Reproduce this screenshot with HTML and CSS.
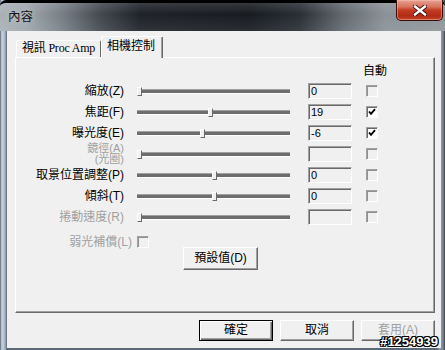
FILE: index.html
```html
<!DOCTYPE html>
<html>
<head>
    <meta charset="UTF-8">
    <title>內容</title>
    <link rel="stylesheet" href="styles.css">
</head>
<body>
    <div class="window">
        <div class="titlebar">
            <span class="title">內容</span>
            <button class="close" aria-label="close">
                <svg width="14" height="11" viewBox="0 0 14 11">
                    <path d="M2 1.5 L12 9.5 M12 1.5 L2 9.5" stroke="#3a0c06" stroke-width="4.2" stroke-linecap="square"/>
                    <path d="M2 1.5 L12 9.5 M12 1.5 L2 9.5" stroke="#fff" stroke-width="2.4" stroke-linecap="square"/>
                </svg>
            </button>
        </div>

        <div class="client">
            <div class="tabs">
                <div class="tab tab-serif">視訊 Proc Amp</div>
                <div class="tab active">相機控制</div>
            </div>

            <div class="panel">
                <div class="auto-head">自動</div>

                <div class="rows">
                    <div class="row">
                        <span class="label">縮放(Z)</span>
                        <div class="slider"><span class="thumb" style="left: 0px"></span></div>
                        <div class="field">0</div>
                        <span class="check"></span>
                    </div>
                    <div class="row">
                        <span class="label">焦距(F)</span>
                        <div class="slider"><span class="thumb" style="left: 71px"></span></div>
                        <div class="field">19</div>
                        <span class="check checked">
                            <svg width="8" height="8" viewBox="0 0 8 8"><path d="M1 3.5 L3 5.8 L7 1.2" fill="none" stroke="#000" stroke-width="1.9"/></svg>
                        </span>
                    </div>
                    <div class="row">
                        <span class="label">曝光度(E)</span>
                        <div class="slider"><span class="thumb" style="left: 63px"></span></div>
                        <div class="field">-6</div>
                        <span class="check checked">
                            <svg width="8" height="8" viewBox="0 0 8 8"><path d="M1 3.5 L3 5.8 L7 1.2" fill="none" stroke="#000" stroke-width="1.9"/></svg>
                        </span>
                    </div>
                    <div class="row disabled">
                        <span class="label two-line">鏡徑(A)<br>(光圈)</span>
                        <div class="slider"><span class="thumb" style="left: 0px"></span></div>
                        <div class="field"></div>
                        <span class="check"></span>
                    </div>
                    <div class="row">
                        <span class="label">取景位置調整(P)</span>
                        <div class="slider"><span class="thumb" style="left: 75px"></span></div>
                        <div class="field">0</div>
                        <span class="check"></span>
                    </div>
                    <div class="row">
                        <span class="label">傾斜(T)</span>
                        <div class="slider"><span class="thumb" style="left: 75px"></span></div>
                        <div class="field">0</div>
                        <span class="check"></span>
                    </div>
                    <div class="row disabled">
                        <span class="label">捲動速度(R)</span>
                        <div class="slider"><span class="thumb" style="left: 0px"></span></div>
                        <div class="field"></div>
                        <span class="check"></span>
                    </div>
                </div>

                <div class="low-light">
                    <span class="label">弱光補償(L)</span>
                    <span class="check"></span>
                </div>

                <button class="btn preset">預設值(D)</button>
            </div>

            <div class="actions">
                <button class="btn default">確定</button>
                <button class="btn">取消</button>
                <button class="btn muted">套用(A)</button>
            </div>
        </div>

        <div class="stamp">#1254939</div>
    </div>
</body>
</html>
```

FILE: styles.css
```css
* {
    margin: 0;
    padding: 0;
    box-sizing: border-box;
}

body {
    width: 445px;
    height: 350px;
    overflow: hidden;
    background: #000;
    font-family: "Liberation Sans", "Noto Sans CJK TC", sans-serif;
    font-size: 12px;
    color: #000;
}

button {
    font-family: inherit;
    font-size: 12px;
    color: inherit;
    cursor: default;
}

/* window frame */
.window {
    position: relative;
    width: 445px;
    height: 350px;
    display: flex;
    flex-direction: column;
    background:
        linear-gradient(to right, #3a4450 0, #aebdcb 1px, #c6d2de 3px, #8898a8 6px, #4d5a67 7px,
            #5c6976 8px, #5c6976 436px, #8d9aa6 440px, #7b8894 443px, #34404b 445px);
}

.titlebar {
    height: 31px;
    display: flex;
    align-items: flex-start;
    padding-left: 8px;
    border-top: 3px solid #000;
    background:
        linear-gradient(to bottom, rgba(255, 255, 255, 0.12), rgba(255, 255, 255, 0) 40%, rgba(255, 255, 255, 0.08)),
        linear-gradient(to right, #aab1b7 0, #a0a7ad 25px, #7a8188 60px, #434950 100px, #1f2329 140px,
            #181c21 250px, #2a2f35 300px, #646b72 345px, #8a9197 385px, #8f979c 445px);
    border-radius: 6px 6px 0 0;
}

.title {
    margin-top: 7px;
    font-size: 12.5px;
    line-height: 14px;
    color: #141414;
    text-shadow: 0 0 6px rgba(230, 235, 240, 0.6);
}

.close {
    margin: -3px 2px 0 auto;
    width: 47px;
    height: 21px;
    display: flex;
    align-items: center;
    justify-content: center;
    border: 1px solid #3b0d08;
    border-top: none;
    border-radius: 0 0 5px 5px;
    background: linear-gradient(to bottom, #e7a395 0, #d7705b 35%, #c53b23 50%, #b22a15 80%, #c4462c 100%);
    box-shadow: inset 0 0 0 1px rgba(255, 200, 185, 0.45);
}

.client {
    flex: 1;
    margin: 0 4px 2px 7px;
    background: #f0f0f0;
    display: flex;
    flex-direction: column;
}

/* tabs */
.tabs {
    height: 26px;
    padding: 5px 0 0 9px;
    display: flex;
    align-items: flex-end;
}

.tab {
    height: 17px;
    width: 85px;
    padding-left: 5px;
    line-height: 15px;
    border: 1px solid;
    border-color: #fff #696969 transparent #fff;
    border-bottom: none;
    border-radius: 2px 2px 0 0;
    background: #f0f0f0;
    white-space: nowrap;
}

.tab-serif {
    font-family: "Liberation Serif", "Noto Sans CJK TC", serif;
    font-size: 12px;
    letter-spacing: -0.2px;
}

.tab.active {
    position: relative;
    z-index: 1;
    width: 62px;
    height: 22px;
    margin-bottom: -1px;
    padding-left: 5px;
    line-height: 18px;
    box-shadow: inset -1px 0 0 #a0a0a0;
}

.panel {
    margin-left: 8px;
    width: 420px;
    height: 256px;
    border: 1px solid;
    border-color: #fff #696969 #696969 #fff;
    box-shadow: inset -1px -1px 0 #a0a0a0;
}

.auto-head {
    height: 25px;
    padding: 6px 0 0 347px;
    line-height: 14px;
}

/* control rows */
.rows {
    display: flex;
    flex-direction: column;
    gap: 5px;
}

.row {
    height: 16px;
    display: flex;
    align-items: center;
}

.label {
    width: 108px;
    text-align: right;
    line-height: 14px;
    white-space: nowrap;
}

.label.two-line {
    font-size: 11px;
    line-height: 11px;
}

.disabled .label,
.low-light .label,
.btn.muted {
    color: #a0a0a0;
}

.slider {
    position: relative;
    width: 153px;
    height: 16px;
    margin-left: 13px;
}

.slider::before {
    content: "";
    position: absolute;
    left: 0;
    right: 0;
    top: 6px;
    height: 3px;
    border-top: 1px solid #a0a0a0;
    border-bottom: 1px solid #fff;
    background: #6d6d6d;
}

.thumb {
    position: absolute;
    top: 4px;
    width: 5px;
    height: 9px;
    border: 1px solid;
    border-color: #fff #696969 #696969 #fff;
    background: #f0f0f0;
}

.field {
    width: 44px;
    height: 16px;
    margin-left: 18px;
    padding-left: 2px;
    border: 1px solid;
    border-color: #a0a0a0 #fff #fff #a0a0a0;
    box-shadow: inset 1px 1px 0 #696969;
    font-size: 11px;
    line-height: 14px;
}

.check {
    width: 12px;
    height: 12px;
    margin-left: 14px;
    display: flex;
    align-items: center;
    justify-content: center;
    border: 1px solid;
    border-color: #a0a0a0 #fff #fff #a0a0a0;
    box-shadow: inset 1px 1px 0 #909090;
}

.check.checked {
    background: #fff;
    box-shadow: inset 1px 1px 0 #696969;
}

.low-light {
    margin-top: 11px;
    height: 11px;
    display: flex;
    align-items: center;
}

.low-light .label {
    width: 116px;
}

.low-light .check {
    margin-left: 5px;
}

/* buttons */
.btn {
    width: 74px;
    height: 21px;
    border: 1px solid;
    border-color: #fff #696969 #696969 #fff;
    box-shadow: inset -1px -1px 0 #a0a0a0;
    background: #f0f0f0;
    line-height: 17px;
}

.btn.preset {
    display: block;
    margin-left: 167px;
    width: 75px;
    height: 23px;
}

.btn.default {
    border-color: #000;
    box-shadow: inset 1px 1px 0 #fff, inset -1px -1px 0 #696969, inset -2px -2px 0 #a0a0a0;
}

.actions {
    margin-top: 7px;
    padding-right: 6px;
    display: flex;
    justify-content: flex-end;
    gap: 7px;
}

.stamp {
    position: absolute;
    right: 7px;
    bottom: 1px;
    font: bold 13px "Liberation Sans", sans-serif;
    color: #fff;
    text-shadow: 1px 0 0 #000, -1px 0 0 #000, 0 1px 0 #000, 0 -1px 0 #000,
        1px 1px 0 #000, -1px -1px 0 #000, 1px -1px 0 #000, -1px 1px 0 #000;
}
```
